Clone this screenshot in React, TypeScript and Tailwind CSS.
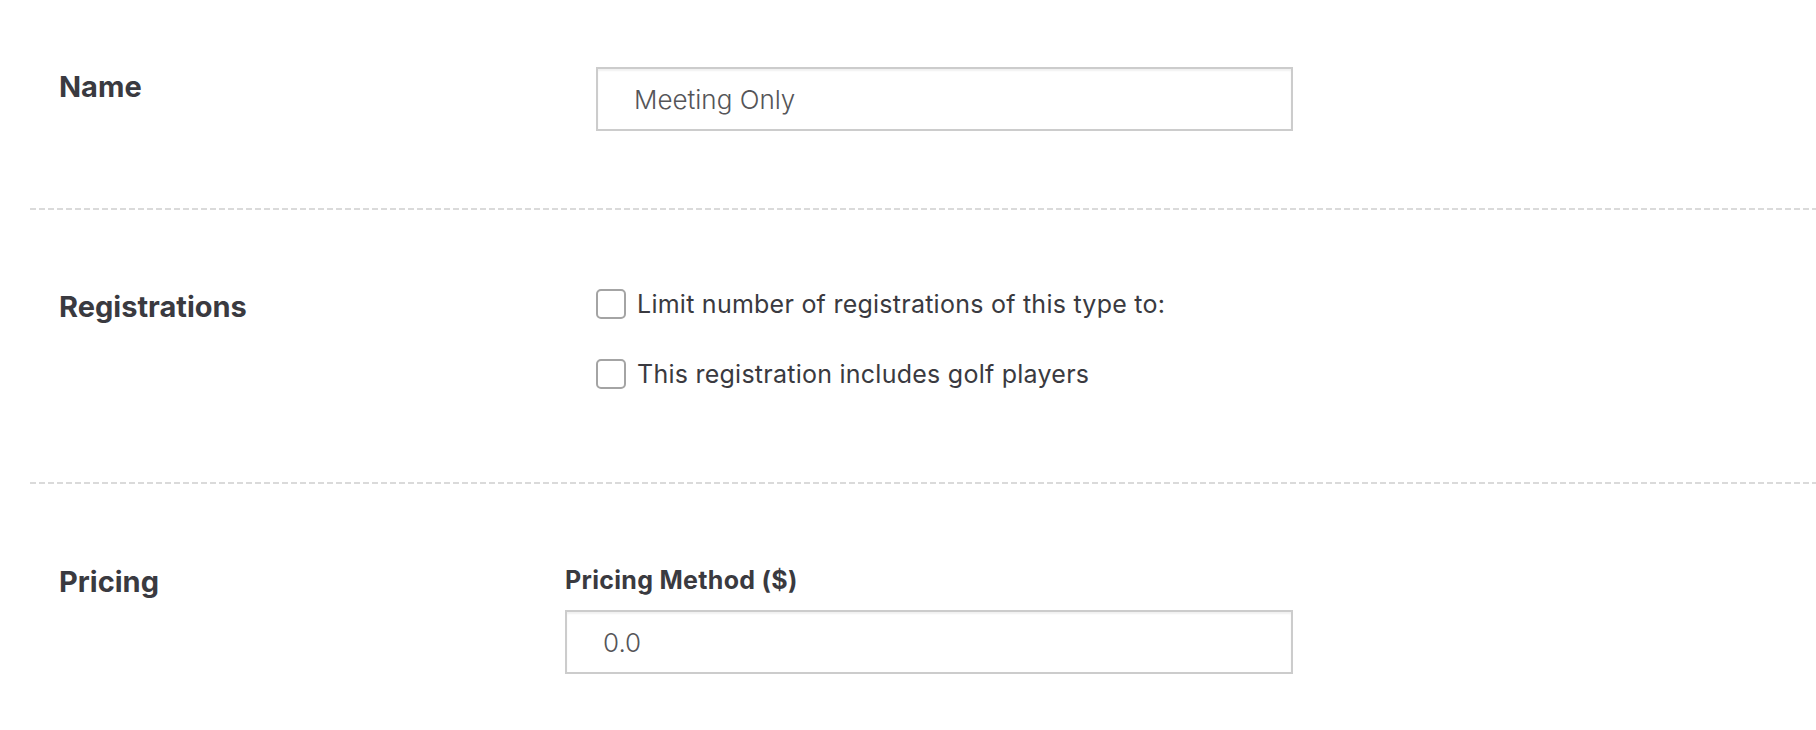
import React from "react";

function Dashed() {
  return (
    <div className="h-[2px] w-full bg-[linear-gradient(to_right,#dadada_6px,transparent_6px)] bg-[length:9px_2px]" />
  );
}

function Label({ children, className = "" }: { children: React.ReactNode; className?: string }) {
  return (
    <div className={"w-[535px] shrink-0 pl-[29px] text-[29px] leading-[29px] font-bold text-[#3a3a40] " + className}>
      {children}
    </div>
  );
}

function TextBox({ value }: { value: string }) {
  return (
    <div className="flex h-[64px] w-full items-center border-2 border-[#cccccc] bg-white pl-[36px] text-[26px] font-light text-[#555558] shadow-[inset_0_2px_2px_rgba(0,0,0,0.06)]">
      {value}
    </div>
  );
}

function Check({ label }: { label: string }) {
  return (
    <div className="flex items-center">
      <div className="h-[30px] w-[30px] shrink-0 rounded-[5px] border-2 border-[#a4a4a4] bg-white" />
      <span className="ml-[11px] text-[25px] leading-[30px] tracking-[0.25px] text-[#3a3a40]">{label}</span>
    </div>
  );
}

export default function App() {
  return (
    <div className="min-h-[730px] w-full bg-white pl-[30px] font-['Inter',sans-serif]">
      {/* Name */}
      <div className="flex items-start pt-[67px] pb-[77px]">
        <Label className="mt-[5px]">Name</Label>
        <div className="w-[728px] pl-[31px]">
          <TextBox value="Meeting Only" />
        </div>
      </div>
      <Dashed />

      {/* Registrations */}
      <div className="flex items-start pt-[79px] pb-[93px]">
        <Label className="mt-[3px]">Registrations</Label>
        <div className="flex w-[728px] flex-col gap-[40px] pl-[31px]">
          <Check label="Limit number of registrations of this type to:" />
          <Check label="This registration includes golf players" />
        </div>
      </div>
      <Dashed />

      {/* Pricing */}
      <div className="flex items-start pt-[83px] pb-[56px]">
        <Label>Pricing</Label>
        <div className="w-[728px]">
          <div className="mt-[1px] text-[25px] leading-[25px] font-bold tracking-[0.3px] text-[#3a3a40]">Pricing Method ($)</div>
          <div className="mt-[17px]">
            <TextBox value="0.0" />
          </div>
        </div>
      </div>
    </div>
  );
}
